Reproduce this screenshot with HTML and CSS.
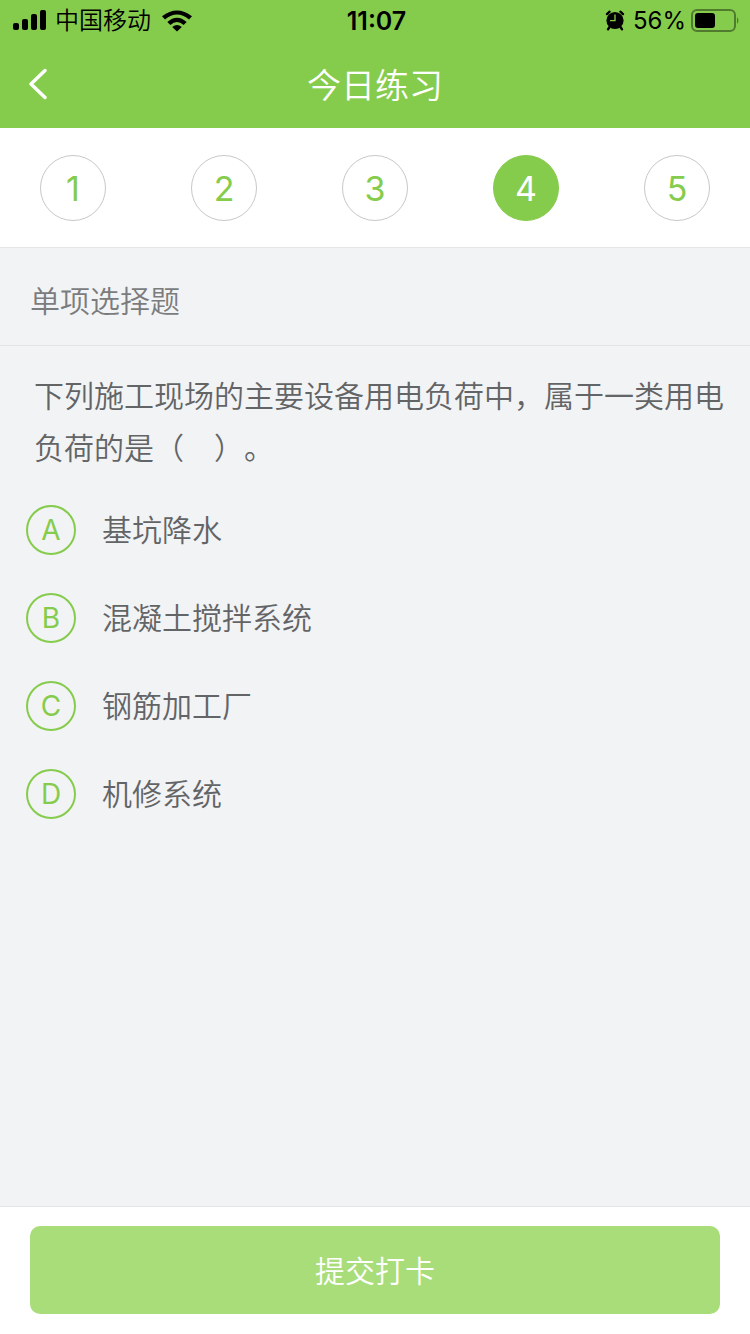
FILE: index.html
```html
<!DOCTYPE html>
<html lang="zh-CN">
<head>
  <meta charset="UTF-8" />
  <meta name="viewport" content="width=device-width, initial-scale=1.0"/>
  <title>今日练习</title>
  <link rel="stylesheet" href="styles.css">
</head>
<body>
  <header class="top">
    <div class="status-bar">
      <div class="status-left">
        <svg width="34" height="22" viewBox="0 0 34 22" aria-hidden="true">
          <rect x="0" y="13" width="6" height="7" rx="2"/>
          <rect x="9" y="9" width="6" height="11" rx="2"/>
          <rect x="18" y="4" width="6" height="16" rx="2"/>
          <rect x="27" y="0" width="6" height="20" rx="2"/>
        </svg>
        <span>中国移动</span>
        <svg width="30" height="22" viewBox="0 1 30 22" aria-hidden="true">
          <path d="M0 7.2Q15-4.4 30 7.2L27 10.4Q15 .4 3 10.4Z"/>
          <path d="M5.3 12.9Q15 4.4 24.7 12.9L21.6 16Q15 10.2 8.4 16Z"/>
          <path d="M10.2 18Q15 14.2 19.8 18L15 22.6Z"/>
        </svg>
      </div>
      <span class="time">11:07</span>
      <div class="status-right">
        <svg width="20" height="22" viewBox="0 0 20 22" aria-hidden="true">
          <circle cx="10" cy="10.5" r="8.6"/>
          <path d="M2 4.1 4.6 1.7M18 4.1 15.4 1.7M4.5 17 3 19.3M15.5 17l1.5 2.3" fill="none" stroke="#000" stroke-width="2.4" stroke-linecap="round"/>
          <path d="M10 4.5v6.2H5" fill="none" stroke="#86cc4c" stroke-width="1.3"/>
        </svg>
        <span>56%</span>
        <svg width="49" height="24" viewBox="0 0 49 24" aria-hidden="true">
          <rect x="1" y="1" width="43" height="21" rx="5" fill="none" stroke="#000" stroke-opacity=".4" stroke-width="2"/>
          <rect x="4" y="4" width="20" height="15" rx="3"/>
          <path d="M46 8q3 3.5 0 7z" opacity=".4"/>
        </svg>
      </div>
    </div>
    <div class="nav-bar">
      <button class="back" type="button" aria-label="返回">
        <svg width="20" height="32" viewBox="0 0 20 32" aria-hidden="true">
          <path d="M18 2.5 4 16l14 13.5" fill="none" stroke="#fff" stroke-width="3.4" stroke-linecap="round" stroke-linejoin="round"/>
        </svg>
      </button>
      <h1>今日练习</h1>
    </div>
  </header>

  <nav class="steps">
    <button type="button">1</button>
    <button type="button">2</button>
    <button type="button">3</button>
    <button type="button" class="active" aria-current="step">4</button>
    <button type="button">5</button>
  </nav>

  <main>
    <h2>单项选择题</h2>
    <p class="question" id="question">下列施工现场的主要设备用电负荷中，属于一类用电负荷的是（&#12288;）。</p>
    <div class="options" role="radiogroup" aria-labelledby="question">
      <label class="option">
        <span class="mark"><input type="radio" name="answer" value="A"><span>A</span></span>
        <span class="text">基坑降水</span>
      </label>
      <label class="option">
        <span class="mark"><input type="radio" name="answer" value="B"><span>B</span></span>
        <span class="text">混凝土搅拌系统</span>
      </label>
      <label class="option">
        <span class="mark"><input type="radio" name="answer" value="C"><span>C</span></span>
        <span class="text">钢筋加工厂</span>
      </label>
      <label class="option">
        <span class="mark"><input type="radio" name="answer" value="D"><span>D</span></span>
        <span class="text">机修系统</span>
      </label>
    </div>
  </main>

  <footer>
    <button class="submit" type="button">提交打卡</button>
  </footer>
</body>
</html>
```
FILE: styles.css
```css
* {
  box-sizing: border-box;
}

body {
  margin: 0;
  min-height: 100vh;
  display: flex;
  flex-direction: column;
  background: #f2f3f5;
  color: #636466;
  font-family: Inter, "Noto Sans CJK SC", sans-serif;
  font-size: 30px;
  font-weight: 350;
  text-spacing-trim: space-all;
}

button {
  padding: 0;
  border: none;
  font: inherit;
  cursor: pointer;
}

svg {
  display: block;
  flex: none;
}

.top {
  background: #86cc4c;
}

.status-bar {
  display: grid;
  grid-template-columns: 1fr auto 1fr;
  align-items: center;
  height: 40px;
  padding: 0 10px 0 13px;
  color: #000;
  font-size: 24px;
  line-height: 40px;
}

.status-bar span {
  padding-top: 1px;
}

.status-left,
.status-right {
  display: flex;
  align-items: center;
}

.status-left {
  gap: 8px;
}

.status-left span {
  padding-right: 3px;
}

.status-right {
  justify-content: flex-end;
  gap: 5px;
}

.status-right span {
  padding-left: 3px;
  font-weight: 400;
}

.time {
  font-size: 25px;
  font-weight: 600;
}

.nav-bar {
  display: grid;
  grid-template-columns: 60px 1fr 60px;
  align-items: center;
  height: 88px;
}

.back {
  display: flex;
  align-items: center;
  height: 88px;
  padding-left: 27px;
  background: none;
}

h1 {
  margin: 0;
  padding-bottom: 2px;
  color: #fff;
  font-size: 34px;
  font-weight: 350;
  text-align: center;
}

.steps {
  display: flex;
  justify-content: space-between;
  padding: 27px 40px 26px;
  background: #fff;
  border-bottom: 1px solid #e4e5e7;
}

.steps button {
  width: 66px;
  height: 66px;
  border: 1px solid #c8c8c8;
  border-radius: 50%;
  background: #fff;
  color: #86cc4c;
  font-size: 34px;
  font-weight: 400;
}

.steps .active {
  border-color: #86cc4c;
  background: #86cc4c;
  color: #fff;
}

main {
  flex: 1;
}

h2 {
  margin: 0;
  padding: 28px 30px 19px;
  border-bottom: 1px solid #e4e5e7;
  color: #7b7c7e;
  font-size: 30px;
  font-weight: 350;
  line-height: 50px;
}

.question {
  margin: 0;
  padding: 24px 25px 12px 34px;
  line-height: 52px;
}

.option {
  display: flex;
  align-items: center;
  gap: 26px;
  height: 88px;
  padding: 0 26px;
  cursor: pointer;
}

.option .text {
  padding-bottom: 4px;
}

.mark {
  display: grid;
  place-items: center;
  color: #86cc4c;
  font-size: 28px;
  font-weight: 400;
}

/* letter sits in the same cell as the round radio */
.mark input,
.mark span {
  grid-area: 1 / 1;
}

.mark input {
  appearance: none;
  width: 50px;
  height: 50px;
  margin: 0;
  border: 2px solid #86cc4c;
  border-radius: 50%;
  cursor: pointer;
}

.mark input:checked {
  background: #86cc4c;
}

.mark input:checked + span {
  color: #fff;
}

footer {
  padding: 19px 30px 20px;
  border-top: 1px solid #e4e5e7;
  background: #fff;
}

.submit {
  width: 100%;
  height: 88px;
  padding-bottom: 3px;
  border-radius: 10px;
  background: #a9dd7a;
  color: #fff;
}
```
